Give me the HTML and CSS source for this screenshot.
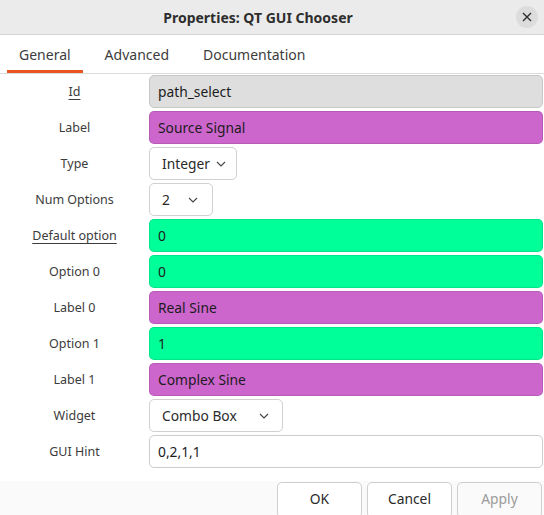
FILE: index.html
```html
<!DOCTYPE html>
<html>
<head>
<meta charset="utf-8">
<link rel="stylesheet" href="styles.css">
</head>
<body>
<div class="window">
  <div class="titlebar">
    <div class="title">Properties: QT GUI Chooser</div>
    <div class="close"><svg width="10" height="10" viewBox="0 0 10 10"><path d="M1 1L9 9M9 1L1 9" stroke="#2e2e2e" stroke-width="1.4" fill="none"/></svg></div>
  </div>
  <div class="tabs">
    <div class="tab active">General</div>
    <div class="tab">Advanced</div>
    <div class="tab">Documentation</div>
  </div>
  <div class="form">
    <div class="lbl"><span class="ul">Id</span></div>
    <div class="field gray">path_select</div>

    <div class="lbl">Label</div>
    <div class="field magenta">Source Signal</div>

    <div class="lbl">Type</div>
    <div class="cell"><div class="combo w-type">Integer<svg class="chev" width="10" height="6" viewBox="0 0 10 6"><path d="M1 1L5 5L9 1" stroke="#444" stroke-width="1.1" fill="none"/></svg></div></div>

    <div class="lbl">Num Options</div>
    <div class="cell"><div class="combo w-num">2<svg class="chev" width="10" height="6" viewBox="0 0 10 6"><path d="M1 1L5 5L9 1" stroke="#444" stroke-width="1.1" fill="none"/></svg></div></div>

    <div class="lbl"><span class="ul">Default option</span></div>
    <div class="field green">0</div>

    <div class="lbl">Option 0</div>
    <div class="field green">0</div>

    <div class="lbl">Label 0</div>
    <div class="field magenta">Real Sine</div>

    <div class="lbl">Option 1</div>
    <div class="field green">1</div>

    <div class="lbl">Label 1</div>
    <div class="field magenta">Complex Sine</div>

    <div class="lbl">Widget</div>
    <div class="cell"><div class="combo w-widget">Combo Box<svg class="chev" width="10" height="6" viewBox="0 0 10 6"><path d="M1 1L5 5L9 1" stroke="#444" stroke-width="1.1" fill="none"/></svg></div></div>

    <div class="lbl">GUI Hint</div>
    <div class="field white">0,2,1,1</div>
  </div>
  <div class="footer">
    <div class="btn">OK</div>
    <div class="btn">Cancel</div>
    <div class="btn disabled">Apply</div>
  </div>
</div>
</body>
</html>
```
FILE: styles.css
```css
html, body {
  margin: 0;
  padding: 0;
  background: #ffffff;
}
body {
  font-family: "Noto Sans", "DejaVu Sans", sans-serif;
  width: 544px;
  height: 515px;
  overflow: hidden;
}
.window {
  display: flex;
  flex-direction: column;
  width: 544px;
  height: 515px;
}
.titlebar {
  height: 34px;
  background: #ebebeb;
  border-bottom: 1px solid #d4d4d4;
  display: flex;
  align-items: center;
  flex-shrink: 0;
}
.title {
  flex: 1;
  text-align: center;
  font-weight: bold;
  font-size: 14px;
  color: #2e2e2e;
}
.close {
  width: 22px;
  height: 22px;
  border-radius: 50%;
  background: #dcdcdc;
  margin-right: 6px;
  display: flex;
  align-items: center;
  justify-content: center;
}
.tabs {
  height: 38px;
  display: flex;
  padding-left: 7px;
  gap: 10px;
  border-bottom: 1px solid #dcdcdc;
  flex-shrink: 0;
}
.tab {
  padding: 0 12px;
  display: flex;
  align-items: center;
  font-size: 14px;
  color: #3d3d3d;
  border-bottom: 3px solid transparent;
  padding-top: 3px;
}
.tab.active {
  border-bottom-color: #e95420;
}
.form {
  display: grid;
  grid-template-columns: 149px 1fr;
  grid-auto-rows: 33px;
  row-gap: 3px;
  padding: 1px 1px 0 0;
}
.lbl {
  display: flex;
  align-items: center;
  justify-content: center;
  font-size: 12.5px;
  color: #3c3c3c;
}
.ul {
  text-decoration: underline;
  text-underline-offset: 3px;
}
.field {
  box-sizing: border-box;
  border-radius: 5px;
  border: 1px solid rgba(0,0,0,0.1);
  padding-left: 8px;
  display: flex;
  align-items: center;
  font-size: 13.8px;
  color: #1c1c1c;
}
.gray { background: #dedede; border-color: #c8c8c8; }
.magenta { background: #cc66cc; }
.green { background: #00ff99; }
.white { background: #ffffff; border-color: #cdcdcd; }
.cell {
  display: flex;
}
.combo {
  box-sizing: border-box;
  height: 33px;
  border: 1px solid #d0d0d0;
  border-radius: 5px;
  background: #ffffff;
  display: flex;
  align-items: center;
  justify-content: space-between;
  padding: 0 12px;
  font-size: 13.8px;
  color: #2a2a2a;
}
.w-type { width: 88px; padding-right: 12px; }
.w-num { width: 64px; padding-right: 14px; }
.w-widget { width: 134px; padding-right: 13px; }
.chev { flex-shrink: 0; }
.w-type .chev { margin-left: 6px; }
.footer {
  margin-top: 13px;
  background: #fafafa;
  flex: 1;
  display: flex;
  justify-content: flex-end;
  gap: 5px;
  padding: 1px 2px 0 0;
}
.btn {
  box-sizing: border-box;
  width: 85px;
  height: 36px;
  border: 1px solid #cfcfcf;
  border-radius: 5px;
  background: #ffffff;
  display: flex;
  align-items: center;
  justify-content: center;
  font-size: 13.8px;
  color: #2a2a2a;
  padding-bottom: 4px;
}
.btn.disabled {
  color: #9a9a9a;
  background: #fafafa;
}
```
